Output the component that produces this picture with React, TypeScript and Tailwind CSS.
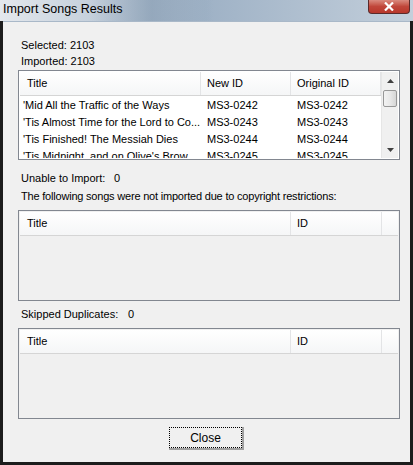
import React from "react";

const font = { fontFamily: '"Liberation Sans", Arial, sans-serif' };

function Header({ cols }: { cols: { label: string; w: string; pl: string }[] }) {
  return (
    <div className="flex h-[24px] bg-gradient-to-b from-white to-[#f5f6f7] border-b border-[#d5d5d5] shrink-0">
      {cols.map((c, i) => (
        <div
          key={i}
          className={`${c.w} ${c.pl} flex items-center border-r border-[#e3e4e6] text-[11px] text-black`}
        >
          {c.label}
        </div>
      ))}
      <div className="flex-1" />
    </div>
  );
}

function ScrollBar() {
  return (
    <div className="w-[17px] h-full bg-[#f0f0f0] border-l border-[#e6e6e6] flex flex-col">
      <div className="h-[17px] flex items-center justify-center">
        <svg width="7" height="4" viewBox="0 0 7 4">
          <path d="M0 4 L3.5 0 L7 4 Z" fill="#404040" />
        </svg>
      </div>
      <div className="h-[17px] mx-[1px] mt-[1px] rounded-[2px] border border-[#979797] bg-gradient-to-r from-[#f2f2f2] via-[#e8e8e8] to-[#d6d6d6]" />
      <div className="flex-1" />
      <div className="h-[17px] flex items-center justify-center">
        <svg width="7" height="4" viewBox="0 0 7 4">
          <path d="M0 0 L3.5 4 L7 0 Z" fill="#404040" />
        </svg>
      </div>
    </div>
  );
}

const rows = [
  ["'Mid All the Traffic of the Ways", "MS3-0242", "MS3-0242"],
  ["'Tis Almost Time for the Lord to Co...", "MS3-0243", "MS3-0243"],
  ["'Tis Finished! The Messiah Dies", "MS3-0244", "MS3-0244"],
  ["'Tis Midnight, and on Olive's Brow", "MS3-0245", "MS3-0245"],
];

function EmptyList({ h }: { h: string }) {
  return (
    <div className={`ml-[15px] w-[382px] ${h} border border-[#828790] bg-[#f0f0f0] p-[1px] flex flex-col`}>
      <div className="flex-1 flex flex-col bg-[#f0f0f0] overflow-hidden">
        <Header
          cols={[
            { label: "Title", w: "w-[271px]", pl: "pl-[7px]" },
            { label: "ID", w: "w-[91px]", pl: "pl-[6px]" },
          ]}
        />
      </div>
    </div>
  );
}

export default function App() {
  return (
    <div className="w-[413px] h-[465px] bg-[#1c1c1c] flex flex-col overflow-hidden" style={font}>
      {/* Title bar */}
      <div className="h-[21px] relative bg-gradient-to-r from-[#e4e8ed] via-[#9fb2c6] to-[#c3cfdb] flex items-center shrink-0">
        <div className="absolute inset-0 bg-gradient-to-r from-transparent via-[#6a849e]/40 to-transparent" style={{ left: 90, right: 200 }} />
        <span className="relative pl-[3px] text-[12.5px] text-black leading-none mt-[-2px]">Import Songs Results</span>
        <div className="absolute right-[3px] top-0 w-[42px] h-[14px] rounded-b-[4px] border border-[#5a2a2a] border-t-0 bg-gradient-to-b from-[#d98a7f] via-[#c0463a] to-[#b8372b] flex items-center justify-center">
          <svg width="10" height="9" viewBox="0 0 10 9">
            <path d="M1 0.5 L9 8.5 M9 0.5 L1 8.5" stroke="white" strokeWidth="2.2" />
          </svg>
        </div>
      </div>
      {/* Client area */}
      <div className="mx-[3px] mb-[3px] flex-1 bg-[#f0f0f0] border-t border-[#a9b8c8] flex flex-col text-[11px] text-black">
        <div className="pl-[18px] mt-[15px] h-[16px] leading-[16px]">Selected: 2103</div>
        <div className="pl-[18px] h-[16px] leading-[16px]">Imported: 2103</div>
        <div className="ml-[15px] mt-[1px] w-[382px] h-[90px] border border-[#828790] bg-white p-[1px] flex">
          <div className="flex-1 flex flex-col overflow-hidden">
            <Header
              cols={[
                { label: "Title", w: "w-[181px]", pl: "pl-[7px]" },
                { label: "New ID", w: "w-[90px]", pl: "pl-[6px]" },
                { label: "Original ID", w: "w-[90px]", pl: "pl-[6px]" },
              ]}
            />
            <div className="flex flex-col pt-[1px]">
              {rows.map((r, i) => (
                <div key={i} className="flex h-[17px] items-center whitespace-nowrap shrink-0">
                  <div className="w-[181px] pl-[3px] overflow-hidden">{r[0]}</div>
                  <div className="w-[90px] pl-[6px]">{r[1]}</div>
                  <div className="w-[90px] pl-[6px]">{r[2]}</div>
                </div>
              ))}
            </div>
          </div>
          <ScrollBar />
        </div>
        <div className="pl-[18px] mt-[10px] h-[16px] leading-[16px] flex">
          <span className="w-[93px]">Unable to Import:</span>
          <span>0</span>
        </div>
        <div className="pl-[18px] mt-[2px] h-[16px] leading-[16px] tracking-[-0.2px]">
          The following songs were not imported due to copyright restrictions:
        </div>
        <div className="mt-[6px]">
          <EmptyList h="h-[91px]" />
        </div>
        <div className="pl-[18px] mt-[5px] h-[16px] leading-[16px] flex">
          <span className="w-[107px]">Skipped Duplicates:</span>
          <span>0</span>
        </div>
        <div className="mt-[6px]">
          <EmptyList h="h-[91px]" />
        </div>
        <div className="flex justify-center mt-[8px]">
          <div className="w-[75px] h-[23px] border-r-2 border-b-2 border-[#a0a0a0] bg-[#f0f0f0]">
            <div className="w-full h-full border border-dotted border-black flex items-center justify-center text-[12px]">
              Close
            </div>
          </div>
        </div>
      </div>
    </div>
  );
}
